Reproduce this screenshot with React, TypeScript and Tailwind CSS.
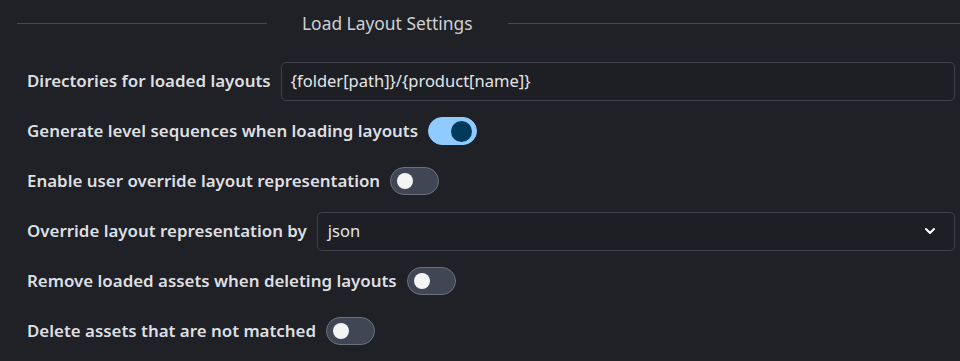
import { ChevronDown } from "lucide-react";

type Row =
  | { kind: "text"; label: string; value: string }
  | { kind: "toggle"; label: string; on: boolean }
  | { kind: "select"; label: string; value: string };

const rows: Row[] = [
  { kind: "text", label: "Directories for loaded layouts", value: "{folder[path]}/{product[name]}" },
  { kind: "toggle", label: "Generate level sequences when loading layouts", on: true },
  { kind: "toggle", label: "Enable user override layout representation", on: false },
  { kind: "select", label: "Override layout representation by", value: "json" },
  { kind: "toggle", label: "Remove loaded assets when deleting layouts", on: false },
  { kind: "toggle", label: "Delete assets that are not matched", on: false },
];

function Toggle({ on }: { on: boolean }) {
  if (on) {
    return (
      <div className="flex h-[28px] w-[49px] shrink-0 items-center justify-end rounded-full border border-[#8fcbff] bg-[#8fcbff] pr-[4px]">
        <div className="h-[21px] w-[21px] rounded-full bg-[#003a5a]" />
      </div>
    );
  }
  return (
    <div className="flex h-[28px] w-[49px] shrink-0 items-center rounded-full border border-[#6b707b] bg-[#414654] pl-[6px]">
      <div className="h-[16px] w-[16px] rounded-full bg-[#f3f4f4]" />
    </div>
  );
}

export default function App() {
  return (
    <div className="h-[361px] w-full overflow-hidden bg-[#1f2127] font-['Noto_Sans',sans-serif] text-[#dedfe1]">
      <div className="flex h-[46px] items-center pl-[17px]">
        <div className="h-px w-[250px] bg-[#474a51]" />
        <span className="px-[35px] text-[17.4px] text-[#cfd0d3]">Load Layout Settings</span>
        <div className="h-px flex-1 bg-[#474a51]" />
      </div>

      <div className="flex flex-col gap-[10px] pl-[27px] pr-[5px] pt-[15px]">
        {rows.map((row) => (
          <div key={row.label} className="flex h-[40px] items-center gap-[10px]">
            <span className="shrink-0 whitespace-nowrap text-[16.9px] font-semibold">{row.label}</span>
            {row.kind === "toggle" && <Toggle on={row.on} />}
            {row.kind === "text" && (
              <div className="flex h-[39px] flex-1 items-center rounded-[5px] border border-[#3e4149] bg-[#1d1f25] px-[9px] text-[16.5px] text-[#e4e5e7]">
                {row.value}
              </div>
            )}
            {row.kind === "select" && (
              <div className="flex h-[39px] flex-1 items-center justify-between rounded-[5px] border border-[#3e4149] bg-[#1d1f25] pl-[10px] pr-[16px] text-[16.5px] text-[#e4e5e7]">
                <span>{row.value}</span>
                <ChevronDown size={16} strokeWidth={3} className="text-white" />
              </div>
            )}
          </div>
        ))}
      </div>
    </div>
  );
}
